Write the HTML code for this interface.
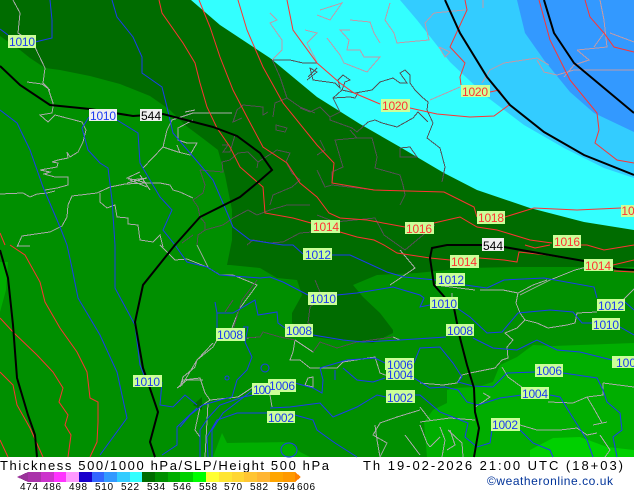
<!DOCTYPE html>
<html><head><meta charset="utf-8"><style>
html,body{margin:0;padding:0;background:#fff;width:634px;height:490px;overflow:hidden}
svg{display:block}
text{font-family:"Liberation Sans",sans-serif}
.b,.r,.g,.d,.l,.k{fill:none}
.b{stroke:#1c3cf0;stroke-width:1}
.r{stroke:#ff3333;stroke-width:1}
.g{stroke:#aaaaaa;stroke-width:1}
.d{stroke:#555055;stroke-width:1}
.l{stroke:#c09aa8;stroke-width:1}
.k{stroke:#000;stroke-width:2}
.lb{font-size:12px}
</style></head><body>
<svg width="634" height="490" viewBox="0 0 634 490" xmlns="http://www.w3.org/2000/svg">
<rect width="634" height="457" fill="#008f00"/>
<!-- light greens -->
<path fill="#00ae00" d="M427 457L424 422L433 410L447 403L447 390L453 388L477 387L493 382L500 365L517 357L533 345L553 346L634 343V457Z"/>
<path fill="#00ae00" d="M213 457L222 433L227 443L290 442L300 452L310 457Z"/>
<path fill="#00ae00" d="M0 262L8 262L6 290L0 312Z"/>
<path fill="#00d000" d="M530 450L553 438L580 437L607 447L634 450V457H530Z"/>
<!-- dark green -->
<path fill="#006c00" d="M0 0H191L220 25L270 58L317 97L360 124L400 147L444 173L477 190L530 208L584 222L634 230V267L517 267L467 268L417 273L377 275L353 285L363 297L380 313L393 330L393 333L373 343L337 340L313 337L292 323L292 313L302 295L297 280L277 278L260 268L230 265L227 265L232 240L232 210L225 175L218 150L205 140L185 125L170 110L150 96L120 84L90 76L60 70L45 68L30 58L20 50L0 36Z"/>
<path fill="#006c00" d="M193 405L202 397L202 410Z"/>
<!-- cyan / blues -->
<path fill="#33ffff" d="M191 0H634V230L584 222L530 208L477 190L444 173L400 147L360 124L317 97L270 58L220 25Z"/>
<path fill="#33ccff" d="M400 0H634V178L604 168L564 148L524 125L487 97L450 62L417 20Z"/>
<path fill="#3399ff" d="M517 0H634V132L594 113L570 92L544 60L525 33Z"/>

<g shape-rendering="crispEdges">
<!-- coast on green: west -->
<path class="g" d="M13 0L20 13L18 33L33 43L45 68L43 83L48 88L53 103L53 107L52 113L40 115L48 122L55 115L82 122L86 130L83 142L78 152L70 157L67 152L68 158L58 160L52 162L58 163L57 167L40 170L50 172L44 174L55 177L68 177L68 185L57 188L45 190"/>
<path class="g" d="M0 194L23 193L30 197L37 194L47 193L55 191M68 205L72 196L97 193L110 187L125 184L147 183L160 183L170 185L173 190L180 192L193 198"/>
<path class="g" d="M68 205L67 217L62 226L50 232L22 236L17 247M17 246L30 246M100 193L100 202L107 208L115 205L117 217L128 218L128 224L138 225L140 240L153 242L160 235L163 247"/>
<path class="g" d="M140 172L127 178L147 183M140 175L150 190M143 168L163 147L167 130L172 120L193 113L232 113M163 147L178 152L190 155L197 143L187 143L178 140L178 128L193 120M180 153L177 145M127 183L147 178L130 180L147 187M185 112L195 110"/>
<path class="g" d="M27 82L42 84L50 90M160 245L167 252L175 260L187 259L207 267L220 275L233 275L250 282L257 285L240 308L233 325L230 335M197 245L208 267"/>
<!-- Alps / south -->
<path class="g" d="M217 340L213 347L197 360L195 367L183 377L180 387L183 380L200 378L205 393L210 400L238 397L253 387M210 400L200 407L195 430L200 437L200 457M208 403L205 457M213 343L197 360L182 385L177 388L187 380L203 380"/>
<path class="g" d="M270 395L272 407M305 385L308 378L313 377L313 387L305 385M295 340L293 352L290 360L300 360L310 368L320 368L337 368L343 362L375 357L380 373L393 378M245 338L260 337L263 332L280 337L295 340M295 340L313 352L320 342L337 348L357 342L393 337L400 340"/>
<path class="g" d="M420 410L397 417L380 423L373 435L387 443L380 457M420 383L443 385L457 383L462 375L470 373L495 368L502 360L508 358L507 347L513 340L505 333L517 328L525 320L537 323L548 328L567 325L575 323L577 313L597 312M480 290L503 290L518 293L516 303L520 313L525 320M518 293L533 285L547 280M623 300L634 289"/>
<path class="g" d="M502 367L508 377L523 388M548 402L573 403L587 397L593 407L602 423L593 425L607 422M603 383L634 387M603 383L603 395L587 397M483 393L490 397L483 402L475 407M420 422L450 418L475 420M520 425L537 430L560 430L577 428L587 435L597 433M600 435L610 450L605 457"/>
<path class="g" d="M440 427L445 440L442 457M448 430L462 443L463 457M420 425L427 443L430 447M430 447L440 437M420 407L430 420M452 293L452 303M450 430L455 445L447 450M375 425L377 440L380 457M405 435L420 455"/>
<path class="g" d="M400 250L415 268L390 285M475 290L435 285M610 261L575 270L550 280L520 295"/>
<!-- coast dark on dark green -->
<path class="d" d="M200 170L223 172L222 162L230 160L238 153L248 152L258 162L257 168M258 162L277 150L290 153L286 162L292 173L300 180L292 187L273 195L270 205M222 145L228 145L223 152L230 152L235 135"/>
<path class="d" d="M200 170L205 185L203 193L193 200L198 207L200 217L205 223L205 230L198 235L197 245M233 218L223 225L205 230M233 218L248 210L257 215L270 210L287 205L310 205M247 245L253 240L270 243L283 242L300 233L312 232M182 243L193 235"/>
<path class="d" d="M243 105L237 110L233 122L242 118M243 105L263 107L263 115L268 112M273 117L275 103L287 98L300 107L315 113M272 59L280 77L287 98M272 60L290 60L303 63L317 63M308 77L317 68M276 125L287 128L285 132L276 130Z"/>
<path class="d" d="M300 108L310 112L320 107L330 117L340 112L333 98L342 90L355 93L372 90L380 82L393 78L400 83L407 83L400 73L405 70L410 75L410 83L415 90L422 97L428 102L427 110L433 123L427 138L440 148L445 167L442 182"/>
<path class="d" d="M307 80L317 72L310 68L313 80L335 83L340 88L338 80L343 75L350 80L345 82L342 90M358 93L355 98L350 97L333 98M330 117L330 120L352 128L357 132L368 122L375 120L382 123L397 127L413 118L418 112L428 122M400 148L410 147L417 157L400 157L400 148"/>
<path class="d" d="M350 130L357 138L335 140L340 157L343 167L332 172L332 183M357 138L372 138L377 157L375 168L400 175L403 185L405 195L400 205M317 170L325 187L332 185L375 190M317 215L335 222L375 218L384 235L405 250L435 225"/>
<path class="d" d="M315 280L322 297L310 307L308 323L313 325M257 280L242 300L233 330L228 335M320 140L325 150L317 155M233 300L225 312"/>
<path class="d" d="M243 338L260 337L263 332L280 337L295 340M313 352L320 342L337 348L357 342L393 337"/>
<!-- coast on cyan/blue -->
<path class="l" d="M270 13L277 20L270 23L282 40L282 50L272 60M305 30L317 33L307 43L317 62M320 10L342 3L330 20L317 15M350 20L370 22L374 33L380 43M350 30L340 30L349 40L347 50L360 50L364 57L380 57L367 72L344 63L340 55L327 38"/>
<path class="l" d="M434 13L465 10M434 13L425 23L429 40L407 42L397 43L394 33L385 20L390 3M439 47L445 57L450 52L439 47M430 100L460 87M483 0L483 8M482 83L490 70L504 63L537 58L549 65M537 60L544 72L557 75L574 70L634 70M577 50L589 60L574 65L564 77M577 50L607 47L604 20L600 0M604 33L594 47M610 33L634 42"/>
</g>

<g shape-rendering="geometricPrecision">
<!-- blue SLP -->
<path class="b" d="M50 0L52 20L52 38L35 42M0 29L8 35"/>
<path class="b" d="M112 0L117 17L133 37L142 57L142 73L162 87L167 107L173 133L190 153L213 180L223 203L233 227L250 240L283 245L293 245L303 254M332 255L350 255L387 272L404 277L436 280M465 285L487 288L504 280L544 278L594 287L597 298M625 302L634 310"/>
<path class="b" d="M0 110L17 123L30 150L43 187L60 227L67 245L72 268L78 298L100 335L117 372L127 418L100 455"/>
<path class="b" d="M89 117L82 128L88 150L100 163L108 168L112 200L115 245L115 288L135 325L140 365L144 375M162 382L160 405L173 407L185 395L197 405"/>
<path class="b" d="M117 120L138 133L140 163L150 180L160 197L172 210L163 230L175 245L187 262L207 267L220 275L260 278L270 277L283 282L308 295M337 295L357 293L393 287L420 295L424 298L420 307L430 305M457 308L470 317L487 333L502 332L518 313L550 310L573 312L582 323L592 323M620 327L634 335"/>
<path class="b" d="M217 328L217 313L215 302L217 313L233 313L255 300L258 315L277 312L278 323L285 328M243 327L248 327L245 342L252 357L247 370L237 380L232 397L220 400L203 405L190 415L180 427M313 335L343 340L363 342L400 340L446 337M473 338L493 348L517 350L537 340L557 350L580 352L612 360"/>
<path class="b" d="M320 368L347 360L375 358L385 363M414 363L420 348L440 347L453 363L462 377L458 382L473 386L493 387L507 373L535 372M563 373L597 378L603 390L607 402L620 413L622 430L613 437L617 457M320 368L323 380L322 393L313 388L295 383M335 370L335 380M343 368L357 380L373 382L385 378"/>
<path class="b" d="M414 378L430 388L445 387L458 390L467 402L478 405L500 398L522 395M550 395L560 397L573 418L587 440L593 457"/>
<path class="b" d="M270 408L290 407L320 403L333 417L357 407L377 395L386 397M415 395L420 395L440 412L468 423L465 437L477 447L490 443L492 430M520 430L533 443L550 450L553 457M295 415L313 420L317 430L335 443L357 457"/>
<path class="b" d="M253 395L243 397L220 405L208 418L200 430L200 457M267 413L237 413L217 420L207 437L208 457M253 390L223 413L212 430L212 457M162 455L177 445L177 427L197 408"/>
<ellipse class="b" cx="265" cy="368" rx="4" ry="4"/><ellipse class="b" cx="227" cy="378" rx="2" ry="2"/><ellipse class="b" cx="289" cy="450" rx="8" ry="7"/>
<!-- red -->
<path class="r" d="M159 0L162 13L183 43L195 63L200 83L207 107L217 128L230 147L240 167L263 187L265 213L293 218L311 223"/>
<path class="r" d="M199 0L210 27L220 57L233 90L247 117L263 147L287 163L300 183L317 197L329 213L340 218L367 220L405 227M434 223L460 217L477 227L497 230L530 240L552 243M580 245L587 245L604 250L634 245"/>
<path class="r" d="M238 0L247 30L263 67L283 103L317 145L334 163L332 183L374 190L444 192L474 207L477 217M505 217L534 208L577 210L621 208"/>
<path class="r" d="M287 0L293 30L317 63L340 83L354 93L380 104M410 108L437 114L470 117L494 116L509 105L499 90L490 92M461 85L460 77L465 63L450 47L467 10L465 0"/>
<path class="r" d="M539 0L550 40L570 80L597 113L599 130L595 143L617 160L634 163"/>
<path class="r" d="M585 0L590 17L604 33L614 47L634 52"/>
<path class="r" d="M340 232L357 237L374 240L384 245L397 253L430 258L450 260M479 258L504 260L517 262L519 252L547 255L584 261M613 265L634 260M614 271L634 272"/>
<path class="r" d="M525 245L535 248L550 245M10 245L25 255L40 282L45 302L60 328L77 352L87 372L90 398L98 402L98 422L97 442L90 457"/>
<path class="r" d="M0 318L13 332L37 355L53 372L63 388L59 402L68 415L65 425L71 435L68 457"/>
<path class="r" d="M0 372L13 385L17 405L30 428L43 457M0 440L8 457M0 233L5 245"/>
<!-- black 544 -->
<path class="k" d="M0 66L20 85L50 105L90 109L133 116L163 114L213 127L237 136L260 153L272 170L257 183L240 197L200 217L175 245L143 285L135 322L143 368L158 412L150 442L155 457"/>
<path class="k" d="M0 250L8 278L13 325L17 378L28 415L35 435L37 457"/>
<path class="k" d="M482 245L447 245L432 248L430 258L434 285L454 308L460 338L467 365L474 388L475 412L479 428L474 457M504 247L584 261L617 269L634 270"/>
<path class="k" d="M445 0L460 33L487 77L510 105L544 132L584 155L634 175"/>
<path class="k" d="M544 0L554 33L574 63L604 88L634 113"/>
</g>

<!-- labels -->
<g class="lb">
<g fill="#ccff99">
<rect x="8" y="35" width="28" height="13"/><rect x="311" y="220" width="29" height="13"/><rect x="405" y="222" width="29" height="12"/><rect x="477" y="211" width="28" height="13"/><rect x="553" y="235" width="28" height="13"/><rect x="621" y="205" width="13" height="12"/><rect x="381" y="99" width="29" height="13"/><rect x="461" y="85" width="29" height="12"/><rect x="450" y="255" width="29" height="13"/><rect x="584" y="259" width="29" height="12"/>
<rect x="303" y="248" width="29" height="12"/><rect x="308" y="292" width="29" height="13"/><rect x="436" y="273" width="29" height="13"/><rect x="430" y="297" width="28" height="12"/><rect x="446" y="324" width="28" height="12"/><rect x="597" y="299" width="28" height="12"/><rect x="592" y="318" width="28" height="12"/><rect x="612" y="356" width="22" height="12"/><rect x="385" y="358" width="29" height="12"/><rect x="386" y="370" width="28" height="10"/><rect x="535" y="364" width="28" height="13"/><rect x="521" y="387" width="28" height="12"/><rect x="386" y="390" width="29" height="13"/><rect x="491" y="418" width="29" height="13"/><rect x="216" y="328" width="29" height="13"/><rect x="285" y="324" width="28" height="13"/><rect x="133" y="375" width="29" height="12"/><rect x="252" y="383" width="28" height="12"/><rect x="268" y="379" width="28" height="13"/><rect x="267" y="411" width="28" height="12"/>
</g>
<rect x="89" y="109" width="28" height="12" fill="#f0f0f0"/><rect x="140" y="109" width="22" height="12" fill="#f0f0f0"/><rect x="482" y="238" width="22" height="13" fill="#f0f0f0"/>
<g fill="#1c3cf0" text-anchor="middle">
<text x="22" y="46" textLength="26">1010</text><text x="103" y="120" textLength="26">1010</text><text x="318" y="259" textLength="26">1012</text><text x="323" y="303" textLength="26">1010</text><text x="451" y="284" textLength="26">1012</text><text x="444" y="308" textLength="26">1010</text><text x="460" y="335" textLength="26">1008</text><text x="611" y="310" textLength="26">1012</text><text x="606" y="329" textLength="26">1010</text><text x="626" y="367" textLength="20">100</text><text x="400" y="369" textLength="26">1006</text><text x="400" y="379" textLength="26">1004</text><text x="549" y="375" textLength="26">1006</text><text x="535" y="398" textLength="26">1004</text><text x="400" y="402" textLength="26">1002</text><text x="505" y="429" textLength="26">1002</text><text x="230" y="339" textLength="26">1008</text><text x="299" y="335" textLength="26">1008</text><text x="147" y="386" textLength="26">1010</text><text x="262" y="394" textLength="18">100</text><text x="282" y="390" textLength="26">1006</text><text x="281" y="422" textLength="26">1002</text>
</g>
<g fill="#ff3333" text-anchor="middle">
<text x="326" y="231" textLength="26">1014</text><text x="419" y="233" textLength="26">1016</text><text x="491" y="222" textLength="26">1018</text><text x="567" y="246" textLength="26">1016</text><text x="628" y="215">10</text><text x="395" y="110" textLength="26">1020</text><text x="475" y="96" textLength="26">1020</text><text x="464" y="266" textLength="26">1014</text><text x="598" y="270" textLength="26">1014</text>
</g>
<g fill="#000" text-anchor="middle"><text x="151" y="120" textLength="20">544</text><text x="493" y="250" textLength="20">544</text></g>
</g>

<!-- bottom -->
<text x="0" y="470" font-size="13" textLength="329" fill="#000">Thickness 500/1000 hPa/SLP/Height 500 hPa</text>
<text x="363" y="470" font-size="13" textLength="260" fill="#000">Th 19-02-2026 21:00 UTC (18+03)</text>
<text x="487" y="485" font-size="12" textLength="126" fill="#003399">©weatheronline.co.uk</text>

<g shape-rendering="crispEdges">
<path d="M17 477L28 472V482Z" fill="#993399"/>
<rect x="28" y="472" width="13" height="10" fill="#aa33aa"/><rect x="41" y="472" width="13" height="10" fill="#cc33cc"/><rect x="54" y="472" width="12" height="10" fill="#ff33ff"/><rect x="66" y="472" width="13" height="10" fill="#ff99ff"/><rect x="79" y="472" width="13" height="10" fill="#1a00cc"/><rect x="92" y="472" width="12" height="10" fill="#3366ff"/><rect x="104" y="472" width="13" height="10" fill="#3399ff"/><rect x="117" y="472" width="13" height="10" fill="#33ccff"/><rect x="130" y="472" width="12" height="10" fill="#33ffff"/><rect x="142" y="472" width="13" height="10" fill="#006c00"/><rect x="155" y="472" width="13" height="10" fill="#008f00"/><rect x="168" y="472" width="12" height="10" fill="#00ae00"/><rect x="180" y="472" width="13" height="10" fill="#00d000"/><rect x="193" y="472" width="13" height="10" fill="#00ff00"/><rect x="206" y="472" width="13" height="10" fill="#ffff33"/><rect x="219" y="472" width="13" height="10" fill="#ffe533"/><rect x="232" y="472" width="12" height="10" fill="#ffd633"/><rect x="244" y="472" width="13" height="10" fill="#ffc533"/><rect x="257" y="472" width="13" height="10" fill="#ffb533"/><rect x="270" y="472" width="13" height="10" fill="#ffa500"/><rect x="283" y="472" width="12" height="10" fill="#ff9900"/>
<path d="M295 472L301 477L295 482Z" fill="#ff8000"/>
</g>
<g font-size="10" fill="#000" text-anchor="middle">
<text x="29" y="490" textLength="18">474</text><text x="52" y="490" textLength="18">486</text><text x="78" y="490" textLength="18">498</text><text x="104" y="490" textLength="18">510</text><text x="130" y="490" textLength="18">522</text><text x="156" y="490" textLength="18">534</text><text x="182" y="490" textLength="18">546</text><text x="208" y="490" textLength="18">558</text><text x="233" y="490" textLength="18">570</text><text x="259" y="490" textLength="18">582</text><text x="286" y="490" textLength="18">594</text><text x="306" y="490" textLength="18">606</text>
</g>
</svg>
</body></html>
